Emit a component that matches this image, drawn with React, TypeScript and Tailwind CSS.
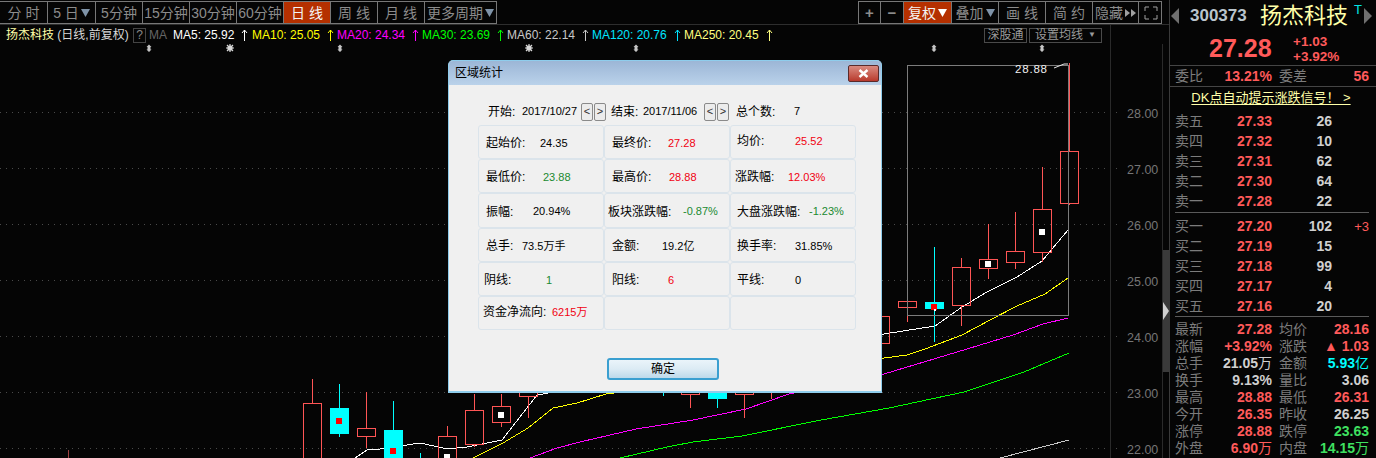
import React from "react";

const leftTabs: [string, string, boolean?][] = [
  ["分 时", "w-[48px]"], ["5 日", "w-[48px]", true], ["5分钟", "w-[47px]"], ["15分钟", "w-[47px]"], ["30分钟", "w-[47px]"], ["60分钟", "w-[47px]"],
  ["日 线", "w-[47px] bg-[#b53000] text-[#f4f4f4]"], ["周 线", "w-[47px]"], ["月 线", "w-[47px]"], ["更多周期", "w-[71px]", true],
];
const rightTabs: [string, string, boolean?][] = [
  ["+", "w-[22px] font-bold text-[15px]"], ["−", "w-[23px] font-bold text-[15px]"], ["复权", "w-[48px] bg-[#b53000] text-[#f4f4f4]", true], ["叠加", "w-[47px]", true],
  ["画 线", "w-[47px]"], ["简 约", "w-[47px]"], ["隐藏", "w-[46px]"], ["", "w-[22px]"],
];

const ma: [string, string, string][] = [
  ["MA5: 25.92", "#ffffff", "w-[79px]"],
  ["MA10: 25.05", "#ffff00", "w-[85px]"],
  ["MA20: 24.34", "#ff00ff", "w-[85px]"],
  ["MA30: 23.69", "#00ff00", "w-[85px]"],
  ["MA60: 22.14", "#c8c8c8", "w-[85px]"],
  ["MA120: 20.76", "#00e5ff", "w-[92px]"],
  ["MA250: 20.45", "#ffff80", "w-[90px]"],
];

const R = "#ff5555";
type C = { x: number; t: number; b: number; wt: number; wb: number; cyan?: boolean; sq?: [string, number] };
const candles: C[] = [
  { x: 312, t: 403, b: 470, wt: 379, wb: 470 },
  { x: 339, t: 408, b: 433, wt: 384, wb: 437, cyan: true, sq: ["#ff0000", 418] },
  { x: 366, t: 428, b: 436, wt: 392, wb: 448 },
  { x: 393, t: 430, b: 470, wt: 401, wb: 470, cyan: true, sq: ["#ff0000", 448] },
  { x: 447, t: 436, b: 470, wt: 426, wb: 470, sq: ["#ffffff", 454] },
  { x: 474, t: 410, b: 444, wt: 394, wb: 447 },
  { x: 501, t: 406, b: 422, wt: 394, wb: 427, sq: ["#ffffff", 412] },
  { x: 528, t: 380, b: 396, wt: 380, wb: 418 },
  { x: 690, t: 380, b: 394, wt: 380, wb: 408 },
  { x: 717, t: 380, b: 398, wt: 380, wb: 408, cyan: true },
  { x: 744, t: 380, b: 394, wt: 380, wb: 418 },
  { x: 880, t: 316, b: 343, wt: 300, wb: 350 },
  { x: 907, t: 301, b: 307, wt: 280, wb: 322 },
  { x: 934, t: 302, b: 308, wt: 247, wb: 342, cyan: true, sq: ["#ff0000", 304] },
  { x: 961, t: 267, b: 305, wt: 258, wb: 326 },
  { x: 988, t: 259, b: 268, wt: 224, wb: 279, sq: ["#ffffff", 261] },
  { x: 1015, t: 251, b: 262, wt: 212, wb: 269 },
  { x: 1042, t: 209, b: 252, wt: 167, wb: 262, sq: ["#ffffff", 229] },
  { x: 1069, t: 151, b: 203, wt: 63, wb: 205 },
];

const lines: [string, string][] = [
  ["#ffffff", "355,458 367,450 380,449 400,446 420,443 434,446 447,449 467,447 502,440 537,395 884,334 935,326 962,307 987,292 1017,277 1042,261 1068,230"],
  ["#ffff00", "473,458 503,443 528,428 553,408 577,403 606,394 884,358 907,355 925,349 962,335 990,320 1017,306 1045,294 1068,278"],
  ["#ff00ff", "530,458 557,448 580,442 636,429 693,420 746,409 789,394 884,374 967,349 1013,335 1043,324 1068,318"],
  ["#00ff00", "620,458 667,447 693,442 742,436 821,420 889,408 964,392 1024,372 1069,353"],
  ["#c8c8c8", "1000,458 1069,440"],
];

const axis = [["28.00", 112], ["27.00", 168], ["26.00", 224], ["25.00", 280], ["24.00", 336], ["23.00", 392], ["22.00", 448]] as const;

function Tri({ className }: { className: string }) {
  return (
    <svg width="9" height="9" viewBox="0 0 9 9" className={className}>
      <path d="M0 1H9L4.5 9Z" fill="currentColor" />
    </svg>
  );
}

function Updown({ x }: { x: number }) {
  return <path d={`M${x} 44.5L${x + 2.5} 47H${x + 1.5}V49.5H${x + 2.5}L${x} 52L${x - 2.5} 49.5H${x - 1.5}V47H${x - 2.5}Z`} fill="#c4c4c4" />;
}
function Star({ x }: { x: number }) {
  return (
    <g stroke="#d8d8d8" strokeWidth="1.2">
      <circle cx={x} cy={48} r="2.6" fill="#e0e0e0" stroke="none" />
      <path d={`M${x - 4} 48H${x + 4}M${x} 44V52M${x - 3} 45L${x + 3} 51M${x + 3} 45L${x - 3} 51`} />
    </g>
  );
}

function Chart() {
  return (
    <svg width="1163" height="414" viewBox="0 44 1163 414" className="block shrink-0">
      {axis.map(([t, y]) => (
        <g key={t}>
          <line x1="0" x2="1118" y1={y + 0.5} y2={y + 0.5} stroke="#4a4a4a" strokeDasharray="1 5" />
          <text x="1127" y={y + 6} fontSize="12.5" fill="#757575" fontFamily="Liberation Sans">{t}</text>
        </g>
      ))}
      <line x1="1110.5" x2="1110.5" y1="44" y2="458" stroke="#2a2a2a" />
      <line x1="1162.5" x2="1162.5" y1="44" y2="458" stroke="#2a2a2a" />
      <g shapeRendering="crispEdges">
        <line x1="68.5" x2="68.5" y1="450" y2="458" stroke="#a04040" />
        <line x1="420.5" x2="420.5" y1="453" y2="458" stroke="#00ffff" />
        <line x1="663.5" x2="663.5" y1="390" y2="396" stroke="#00ffff" />
        <line x1="771.5" x2="771.5" y1="390" y2="399" stroke={R} />
      </g>
      {lines.map(([c, p]) => (
        <polyline key={c} points={p} fill="none" stroke={c} strokeWidth="1" shapeRendering="crispEdges" />
      ))}
      <g shapeRendering="crispEdges">
        {candles.map((c) => {
          const col = c.cyan ? "#00ffff" : R;
          const cx = c.x + 0.5;
          return (
            <g key={c.x}>
              <line x1={cx} x2={cx} y1={c.wt} y2={c.t} stroke={col} />
              <line x1={cx} x2={cx} y1={c.b} y2={c.wb} stroke={col} />
              <rect x={c.x - 9 + 0.5} y={c.t + 0.5} width="18" height={c.b - c.t} fill={c.cyan ? col : "none"} stroke={col} />
              {c.sq && <rect x={c.x - 3} y={c.sq[1]} width="6" height="6" fill={c.sq[0]} />}
            </g>
          );
        })}
        <rect x="934" y="309" width="2" height="2" fill="#fff" />
        <rect x="907.5" y="65.5" width="161" height="250" fill="none" stroke="#7c7c7c" />
      </g>
      <text x="1015" y="73" fontSize="11.5" letterSpacing="0.8" fill="#f0f0f0" fontFamily="Liberation Sans">28.88</text>
      <path d="M1054 68L1064 64H1068" stroke="#e8e8e8" fill="none" />
      {[149, 340, 636, 934, 1042].map((x) => <Updown key={x} x={x} />)}
      {[230, 529].map((x) => <Star key={x} x={x} />)}
    </svg>
  );
}

type Cell = { l: string; v?: string; c?: string; pad: string; w: string; raise?: boolean };
const cells: Cell[] = [
  { l: "起始价:", v: "24.35", c: "text-black", pad: "pl-[7px]", w: "w-[54px]" },
  { l: "最终价:", v: "27.28", c: "text-[#f00010]", pad: "pl-[7px]", w: "w-[56px]" },
  { l: "均价:", v: "25.52", c: "text-[#f00010]", pad: "pl-[6px]", w: "w-[58px]", raise: true },
  { l: "最低价:", v: "23.88", c: "text-[#1a8a30]", pad: "pl-[7px]", w: "w-[57px]" },
  { l: "最高价:", v: "28.88", c: "text-[#f00010]", pad: "pl-[7px]", w: "w-[57px]" },
  { l: "涨跌幅:", v: "12.03%", c: "text-[#f00010]", pad: "pl-[4px]", w: "w-[53px]" },
  { l: "振幅:", v: "20.94%", c: "text-black", pad: "pl-[7px]", w: "w-[47px]" },
  { l: "板块涨跌幅:", v: "-0.87%", c: "text-[#1a8a30]", pad: "pl-[3px]", w: "w-[75px]" },
  { l: "大盘涨跌幅:", v: "-1.23%", c: "text-[#1a8a30]", pad: "pl-[6px]", w: "w-[72px]" },
  { l: "总手:", v: "73.5万手", c: "text-black", pad: "pl-[7px]", w: "w-[36px]" },
  { l: "金额:", v: "19.2亿", c: "text-black", pad: "pl-[7px]", w: "w-[50px]" },
  { l: "换手率:", v: "31.85%", c: "text-black", pad: "pl-[6px]", w: "w-[58px]" },
  { l: "阴线:", v: "1", c: "text-[#1a8a30]", pad: "pl-[5px]", w: "w-[62px]" },
  { l: "阳线:", v: "6", c: "text-[#f00010]", pad: "pl-[7px]", w: "w-[56px]" },
  { l: "平线:", v: "0", c: "text-black", pad: "pl-[6px]", w: "w-[58px]" },
  { l: "资金净流向:", v: "6215万", c: "text-[#f00010]", pad: "pl-[4px]", w: "w-[69px]", raise: true },
  { l: "", pad: "", w: "" },
  { l: "", pad: "", w: "" },
];

function NavBtn({ t }: { t: string }) {
  return (
    <span className="flex h-[18px] w-[12px] items-center justify-center rounded-[2px] border border-[#8a8a8a] bg-[#ececec] text-[11px] text-[#303030]">{t}</span>
  );
}

function Dialog() {
  return (
    <div className="absolute left-[448px] top-[60px] flex h-[333px] w-[434px] flex-col overflow-hidden rounded-t-[5px] border border-b-2 border-[#8fcdec] bg-[#f0f0f0] text-[12px] text-black">
      <div className="flex h-[24px] shrink-0 items-center justify-between bg-gradient-to-b from-[#9cb6d6] to-[#bad2ea] pl-[6px] pr-[2px]">
        <span>区域统计</span>
        <span className="flex h-[17px] w-[31px] items-center justify-center rounded-[2px] border border-[#5a2a2a] bg-gradient-to-b from-[#d98a80] to-[#b8382c]">
          <svg width="11" height="9" viewBox="0 0 11 9"><path d="M1.5 1L9.5 8M9.5 1L1.5 8" stroke="#fff" strokeWidth="2.4" /></svg>
        </span>
      </div>
      <div className="flex h-[40px] shrink-0 items-center pl-[39px] pt-[13px]">
        <span className="w-[34px]">开始:</span>
        <span className="w-[59px] text-[11px]">2017/10/27</span>
        <span className="flex w-[30px] gap-px"><NavBtn t="<" /><NavBtn t=">" /></span>
        <span className="w-[32px]">结束:</span>
        <span className="w-[61px] text-[11px]">2017/11/06</span>
        <span className="flex w-[32px] gap-px"><NavBtn t="<" /><NavBtn t=">" /></span>
        <span className="w-[58px]">总个数:</span>
        <span className="text-[11px]">7</span>
      </div>
      <div className="ml-[29px] grid w-[378px] grid-cols-3">
        {cells.map((c, i) => (
          <div key={i} className={`flex items-center rounded-[3px] border-[1.5px] border-[#dbe4eb] pt-[2px] ${i >= 6 && i <= 8 ? "h-[35px]" : "h-[34px]"} ${c.pad}`}>
            <span className={`${c.w} shrink-0 whitespace-nowrap ${c.raise ? "-translate-y-[2px]" : ""}`}>{c.l}</span>
            <span className={`whitespace-nowrap text-[11px] ${c.c ?? ""} ${c.raise ? "-translate-y-[2px]" : ""}`}>{c.v}</span>
          </div>
        ))}
      </div>
      <button className="ml-[158px] mt-[28px] flex h-[22px] w-[112px] items-center justify-center rounded-[3px] border-2 border-[#3a9fd0] bg-gradient-to-b from-[#eaf4fa] via-[#dcebf4] to-[#bcd9ea] text-[12px] text-black">确定</button>
    </div>
  );
}

const sells = [["卖五", "27.33", "26"], ["卖四", "27.32", "10"], ["卖三", "27.31", "62"], ["卖二", "27.30", "64"], ["卖一", "27.28", "22"]];
const buys = [["买一", "27.20", "102", "+3"], ["买二", "27.19", "15"], ["买三", "27.18", "99"], ["买四", "27.17", "4"], ["买五", "27.16", "20"]];

const red = "text-[#ff5a5a]";
const wht = "text-[#d0d0d0]";
const grn = "text-[#3fe060]";
const cyn = "text-[#00ffff]";

const stats: [string, React.ReactNode, string, string, React.ReactNode, string][] = [
  ["最新", "27.28", red, "均价", "28.16", red],
  ["涨幅", "+3.92%", red, "涨跌", "▲ 1.03", red],
  ["总手", <>21.05<span className="font-normal">万</span></>, wht, "金额", <>5.93<span className="font-normal">亿</span></>, cyn],
  ["换手", "9.13%", wht, "量比", "3.06", wht],
  ["最高", "28.88", red, "最低", "26.31", red],
  ["今开", "26.35", red, "昨收", "26.25", wht],
  ["涨停", "28.88", red, "跌停", "23.63", grn],
  ["外盘", <>6.90<span className="font-normal">万</span></>, red, "内盘", <>14.15<span className="font-normal">万</span></>, grn],
];

function Book({ rows, className }: { rows: string[][]; className: string }) {
  return (
    <div className={`flex flex-col ${className}`}>
      {rows.map((r) => (
        <div key={r[0]} className="flex h-[20px] items-center pl-[5px] text-[14px] leading-none">
          <span className="w-[40px] text-[#7c7c7c]">{r[0]}</span>
          <span className={`w-[57px] text-right font-bold ${red}`}>{r[1]}</span>
          <span className={`w-[60px] text-right font-bold ${wht}`}>{r[2]}</span>
          <span className={`w-[37px] text-right text-[13px] ${red}`}>{r[3] ?? ""}</span>
        </div>
      ))}
    </div>
  );
}

function Panel() {
  return (
    <aside className="flex h-[458px] w-[207px] shrink-0 flex-col border-l border-[#3a3a3a]">
      <div className="relative flex h-[32px] shrink-0 items-center pl-[1px]">
        <svg width="9" height="16" viewBox="0 0 9 16" className="shrink-0"><path d="M8 0V16L0 8Z" fill="#707070" /></svg>
        <span className="ml-[10px] w-[70px] text-[17px] font-bold text-[#b9c4cc]">300373</span>
        <span className="whitespace-nowrap text-[22px] leading-none text-[#ffffa8]">扬杰科技</span>
        <span className="absolute left-[184px] top-[0px] text-[13px] text-[#00e5e5]">T</span>
        <svg width="9" height="16" viewBox="0 0 9 16" className="ml-[15px] shrink-0"><path d="M1 0V16L9 8Z" fill="#707070" /></svg>
      </div>
      <div className="flex h-[33px] shrink-0 items-center">
        <span className={`ml-[39px] w-[84px] text-[25px] font-bold leading-none ${red}`}>27.28</span>
        <div className={`flex flex-col text-[13.5px] font-bold leading-[15px] ${red}`}>
          <span>+1.03</span>
          <span>+3.92%</span>
        </div>
      </div>
      <div className="flex h-[22px] shrink-0 items-center border-y border-[#454545] pl-[5px] text-[14px] leading-none">
        <span className="w-[40px] text-[#7c7c7c]">委比</span>
        <span className={`w-[57px] text-right font-bold ${red}`}>13.21%</span>
        <span className="ml-[7px] w-[36px] text-[#7c7c7c]">委差</span>
        <span className={`w-[54px] text-right font-bold ${red}`}>56</span>
      </div>
      <div className="flex h-[21px] shrink-0 items-center justify-center pr-[4px] text-[13px] leading-none text-[#ffffa8]">
        <span className="whitespace-nowrap underline underline-offset-2">DK点自动提示涨跌信号！ &gt;</span>
      </div>
      <Book rows={sells} className="shrink-0 pt-[3px]" />
      <div className="ml-[5px] mt-[1px] h-px w-[194px] shrink-0 bg-[#5a5a5a]" />
      <Book rows={buys} className="shrink-0 pt-[3px]" />
      <div className="ml-[5px] h-px w-[194px] shrink-0 bg-[#5a5a5a]" />
      <div className="flex flex-col pt-[3px]">
        {stats.map((s) => (
          <div key={s[0]} className="flex h-[17px] items-center pl-[5px] text-[14px] leading-none">
            <span className="w-[40px] text-[#7c7c7c]">{s[0]}</span>
            <span className={`w-[57px] whitespace-nowrap text-right font-bold ${s[2]}`}>{s[1]}</span>
            <span className="ml-[7px] w-[36px] text-[#7c7c7c]">{s[3]}</span>
            <span className={`w-[54px] whitespace-nowrap text-right font-bold ${s[5]}`}>{s[4]}</span>
          </div>
        ))}
      </div>
    </aside>
  );
}

export default function App() {
  return (
    <div className="relative flex h-[458px] w-[1376px] overflow-hidden bg-[#050505] [font-family:'Liberation_Sans','Noto_Sans_CJK_SC',sans-serif]">
      <div className="flex w-[1169px] shrink-0 flex-col">
        <div className="flex h-[25px] shrink-0 items-start justify-between border-b border-[#2e2e2e] pt-px">
          <div className="flex h-[23px] border border-l-0 border-[#777]">
            {leftTabs.map(([t, c, arrow]) => (
              <div key={t} className={`flex h-full items-center justify-center gap-[2px] whitespace-nowrap border-r border-[#777] text-[14px] leading-none text-[#8c8c8c] last:border-r-0 ${c}`}>
                <span>{t}</span>
                {arrow && <Tri className="text-[#7f93a8]" />}
              </div>
            ))}
          </div>
          <div className="mr-[7px] flex h-[23px] border border-[#777]">
            {rightTabs.map(([t, c, arrow], i) => (
              <div key={i} className={`flex h-full items-center justify-center gap-[2px] whitespace-nowrap border-r border-[#777] text-[14px] leading-none text-[#8c8c8c] last:border-r-0 ${c}`}>
                <span>{t}</span>
                {arrow && <Tri className={t === "复权" ? "text-white" : "text-[#7f93a8]"} />}
                {t === "隐藏" && (
                  <svg width="11" height="8" viewBox="0 0 11 8"><path d="M0 0L5 4L0 8ZM6 0L11 4L6 8Z" fill="#a0a0a0" /></svg>
                )}
                {t === "" && (
                  <svg width="14" height="14" viewBox="0 0 14 14" fill="none" stroke="#a0a0a0"><path d="M1 5V1H5M9 1H13V5M13 9V13H9M5 13H1V9" /></svg>
                )}
              </div>
            ))}
          </div>
        </div>
        <div className="flex h-[19px] w-[1111px] shrink-0 items-center whitespace-nowrap border-r border-[#2a2a2a] pl-[6px] pt-px text-[12px] leading-none">
          <span className="w-[127px] text-[#ffffa8]">扬杰科技 <span className="text-[#d8d8d8]">(日线,前复权)</span></span>
          <span className="mr-[3px] flex h-[15px] w-[13px] items-center justify-center border border-[#444] text-[#888]">?</span>
          <span className="w-[24px] text-[#666]">MA</span>
          {ma.map(([t, col, w]) => (
            <span key={t} className={`flex items-center ${w}`} style={{ color: col }}>
              <span>{t}</span>
              <svg width="7" height="12" viewBox="0 0 7 12" className="ml-[7px] shrink-0" fill="none" stroke="currentColor"><path d="M3.5 12V1M1 4L3.5 1L6 4" /></svg>
            </span>
          ))}
          <span className="ml-auto mr-[2px] flex h-[15px] w-[43px] items-center justify-center border border-[#4a4a4a] text-[#9a9a9a]">深股通</span>
          <span className="mr-[8px] flex h-[15px] w-[73px] items-center justify-center gap-[5px] border border-[#4a4a4a] text-[#9a9a9a]">设置均线 <span className="text-[8px]">▼</span></span>
        </div>
        <div className="flex shrink-0">
          <Chart />
          <div className="mt-[206px] flex h-[122px] w-[6px] items-center bg-[#3a3a3a]">
            <svg width="6" height="18" viewBox="0 0 6 18"><path d="M0 0L6 9L0 18Z" fill="#d0d0d0" /></svg>
          </div>
        </div>
      </div>
      <Panel />
      <Dialog />
    </div>
  );
}
